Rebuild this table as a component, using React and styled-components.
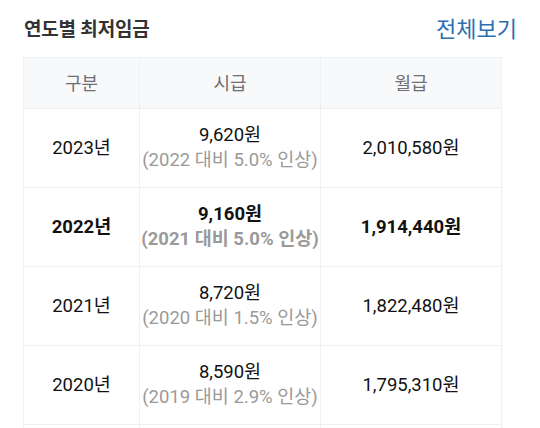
import React from "react";
import styled, { createGlobalStyle } from "styled-components";

const GlobalStyle = createGlobalStyle`
  html, body {
    margin: 0;
    padding: 0;
    background: #ffffff;
  }
  body {
    font-family: Roboto, "Noto Sans CJK KR", sans-serif;
  }
`;

const Section = styled.section`
  width: 540px;
  height: 428px;
  overflow: hidden;
  padding: 0 23px;
  box-sizing: border-box;
`;

const Header = styled.div`
  display: flex;
  align-items: center;
  justify-content: space-between;
  height: 57px;
  padding-bottom: 3px;
  box-sizing: border-box;
`;

const Title = styled.h2`
  margin: 0 0 0 1px;
  font-size: 19px;
  font-weight: 700;
  color: #333333;
  letter-spacing: -0.2px;
`;

const MoreLink = styled.a`
  font-size: 22px;
  color: #2b6fb0;
  text-decoration: none;
`;

const Table = styled.div`
  width: 478px;
  display: grid;
  grid-template-columns: 116px 181px 1fr;
  border-top: 1px solid #eef0f2;
  border-left: 1px solid #eef0f2;
`;

const Cell = styled.div`
  display: flex;
  flex-direction: column;
  align-items: center;
  justify-content: center;
  height: ${(p) => (p.$head ? "50px" : "78px")};
  background: ${(p) => (p.$head ? "#f7f9fb" : "#ffffff")};
  border-right: 1px solid #eef0f2;
  border-bottom: 1px solid #eef0f2;
  font-size: ${(p) => (p.$head ? "18px" : "18.5px")};
  font-weight: ${(p) => (p.$bold ? 700 : 400)};
  color: ${(p) => (p.$head ? "#707070" : "#111111")};
  line-height: 25px;
  text-align: center;
`;

const Sub = styled.span`
  color: #9a9a9a;
`;

const rows = [
  { year: "2023년", hourly: "9,620원", note: "(2022 대비 5.0% 인상)", monthly: "2,010,580원" },
  { year: "2022년", hourly: "9,160원", note: "(2021 대비 5.0% 인상)", monthly: "1,914,440원", bold: true },
  { year: "2021년", hourly: "8,720원", note: "(2020 대비 1.5% 인상)", monthly: "1,822,480원" },
  { year: "2020년", hourly: "8,590원", note: "(2019 대비 2.9% 인상)", monthly: "1,795,310원" },
];

export default function App() {
  return (
    <>
      <GlobalStyle />
      <Section>
        <Header>
          <Title>연도별 최저임금</Title>
          <MoreLink href="#">전체보기</MoreLink>
        </Header>
        <Table>
          <Cell $head>구분</Cell>
          <Cell $head>시급</Cell>
          <Cell $head>월급</Cell>
          {rows.map((r) => (
            <React.Fragment key={r.year}>
              <Cell $bold={r.bold}>{r.year}</Cell>
              <Cell $bold={r.bold}>
                <span>{r.hourly}</span>
                <Sub>{r.note}</Sub>
              </Cell>
              <Cell $bold={r.bold}>{r.monthly}</Cell>
            </React.Fragment>
          ))}
          <Cell />
          <Cell />
          <Cell />
        </Table>
      </Section>
    </>
  );
}
